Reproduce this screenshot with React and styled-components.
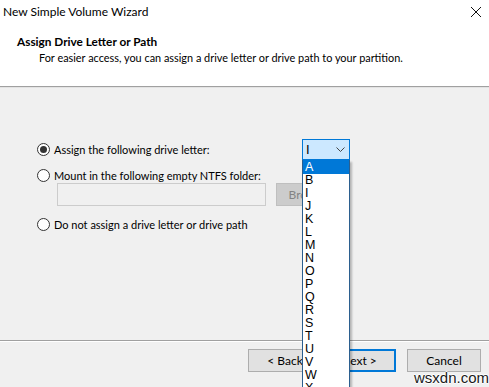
import React from "react";
import styled, { createGlobalStyle } from "styled-components";

const Global = createGlobalStyle`
  html, body { margin: 0; padding: 0; }
  body { width: 489px; height: 387px; overflow: hidden; }
  * { box-sizing: border-box; }
`;

const Window = styled.div`
  position: relative;
  width: 489px;
  height: 387px;
  overflow: hidden;
  display: flex;
  flex-direction: column;
  background: #f0f0f0;
  font-family: Lato, "Noto Sans", sans-serif;
  font-size: 11px;
  color: #000;
`;

const Header = styled.div`
  height: 86px;
  background: #fff;
  display: flex;
  flex-direction: column;
`;

const TitleBar = styled.div`
  height: 25px;
  display: flex;
  align-items: center;
  justify-content: space-between;
  padding: 0 6px 1px 3px;
`;

const Title = styled.span`
  font-size: 12px;
  line-height: 16px;
`;

const CloseIcon = styled.svg`
  width: 12px;
  height: 12px;
  margin-right: 1px;
`;

const Heading = styled.div`
  margin-top: 9px;
  padding-left: 17px;
  font-weight: bold;
  font-size: 11.8px;
  line-height: 16px;
`;

const SubHeading = styled.div`
  padding-left: 39px;
  font-size: 10.9px;
  line-height: 16px;
`;

const Divider = styled.div`
  height: 2px;
  border-top: 1px solid #a0a0a0;
  border-bottom: 1px solid ${(p) => p.$under};
`;

const Content = styled.div`
  flex: 1;
  display: flex;
  flex-direction: column;
  padding: 51px 0 0 37px;
`;

const OptionRow = styled.div`
  display: flex;
  align-items: center;
  height: ${(p) => p.$h}px;
  margin-top: ${(p) => p.$mt || 0}px;
`;

const Label = styled.label`
  display: flex;
  align-items: center;
  gap: 4px;
  width: ${(p) => (p.$w ? `${p.$w}px` : "auto")};
  line-height: 15px;
  white-space: nowrap;
`;

const Radio = styled.span`
  width: 13px;
  height: 13px;
  border-radius: 50%;
  border: 1px solid #333;
  background: #fff;
  display: flex;
  align-items: center;
  justify-content: center;
  flex: none;
  &::after {
    content: "";
    width: 7px;
    height: 7px;
    border-radius: 50%;
    background: ${(p) => (p.$checked ? "#333" : "transparent")};
  }
`;

const Combo = styled.div`
  width: 48px;
  height: 21px;
  border: 1px solid #0078d7;
  background: #cce8ff;
  display: flex;
  align-items: center;
  justify-content: space-between;
  padding: 0 4px 0 3px;
  font-family: "Liberation Sans", Arial, sans-serif;
  font-size: 13px;
`;

const Chevron = styled.svg`
  width: 9px;
  height: 6px;
`;

const FolderRow = styled.div`
  display: flex;
  gap: 10px;
  height: 23px;
  padding-left: 20px;
`;

const PathInput = styled.div`
  width: 209px;
  height: 23px;
  border: 1px solid #cccccc;
  background: #f0f0f0;
`;

const DisabledButton = styled.div`
  width: 73px;
  height: 23px;
  background: #cccccc;
  border: 1px solid #bfbfbf;
  color: #838383;
  display: flex;
  align-items: center;
  justify-content: center;
  font-size: 12px;
`;

const ButtonBar = styled.div`
  display: flex;
  justify-content: flex-end;
  padding: 7px 8px 0 0;
  height: 45px;
`;

const Button = styled.div`
  width: 74px;
  height: 23px;
  background: #e1e1e1;
  border: ${(p) => (p.$default ? "2px solid #0078d7" : "1px solid #adadad")};
  display: flex;
  align-items: center;
  justify-content: center;
  margin-left: ${(p) => p.$gap || 0}px;
  font-size: 12px;
`;

const DropList = styled.ul`
  position: absolute;
  left: 302px;
  top: 160px;
  width: 48px;
  margin: 0;
  padding: 0;
  list-style: none;
  background: #fff;
  border: 1px solid #2b5f8f;
  border-top: none;
  box-shadow: 2px 2px 2px rgba(0, 0, 0, 0.25);
  font-family: "Liberation Sans", Arial, sans-serif;
  font-size: 12.5px;
`;

const DropItem = styled.li`
  height: 13px;
  line-height: 13px;
  padding-left: 2px;
  background: ${(p) => (p.$selected ? "#0078d7" : "transparent")};
  color: ${(p) => (p.$selected ? "#fff" : "#000")};
  ${(p) => p.$selected && "height: 14px; line-height: 14px;"}
`;

const Watermark = styled.div`
  position: absolute;
  right: 0;
  bottom: 1px;
  font-family: "Liberation Sans", Arial, sans-serif;
  font-size: 15px;
  color: #1a1a1a;
  text-shadow: 1px 0 #fff, -1px 0 #fff, 0 1px #fff, 0 -1px #fff;
`;

const letters = ["A", "B", "I", "J", "K", "L", "M", "N", "O", "P", "Q", "R", "S", "T", "U", "V", "W", "X"];

export default function App() {
  return (
    <>
      <Global />
      <Window>
        <Header>
          <TitleBar>
            <Title>New Simple Volume Wizard</Title>
            <CloseIcon viewBox="0 0 12 12">
              <path d="M1 1 L11 11 M11 1 L1 11" stroke="#111" strokeWidth="1" fill="none" />
            </CloseIcon>
          </TitleBar>
          <Heading>Assign Drive Letter or Path</Heading>
          <SubHeading>For easier access, you can assign a drive letter or drive path to your partition.</SubHeading>
        </Header>
        <Divider $under="#e3e3e3" />
        <Content>
          <OptionRow $h={21}>
            <Label $w={265}>
              <Radio $checked />
              Assign the following drive letter:
            </Label>
            <Combo>
              <span>I</span>
              <Chevron viewBox="0 0 9 6">
                <path d="M0.5 0.5 L4.5 4.5 L8.5 0.5" stroke="#444" strokeWidth="1" fill="none" />
              </Chevron>
            </Combo>
          </OptionRow>
          <OptionRow $h={15} $mt={8}>
            <Label>
              <Radio />
              Mount in the following empty NTFS folder:
            </Label>
          </OptionRow>
          <FolderRow>
            <PathInput />
            <DisabledButton>Browse...</DisabledButton>
          </FolderRow>
          <OptionRow $h={15} $mt={11}>
            <Label>
              <Radio />
              Do not assign a drive letter or drive path
            </Label>
          </OptionRow>
        </Content>
        <Divider $under="#ffffff" />
        <ButtonBar>
          <Button>&lt; Back</Button>
          <Button $default>Next &gt;</Button>
          <Button $gap={11}>Cancel</Button>
        </ButtonBar>
        <DropList>
          {letters.map((l, i) => (
            <DropItem key={l} $selected={i === 0}>
              {l}
            </DropItem>
          ))}
        </DropList>
        <Watermark>wsxdn.com</Watermark>
      </Window>
    </>
  );
}
